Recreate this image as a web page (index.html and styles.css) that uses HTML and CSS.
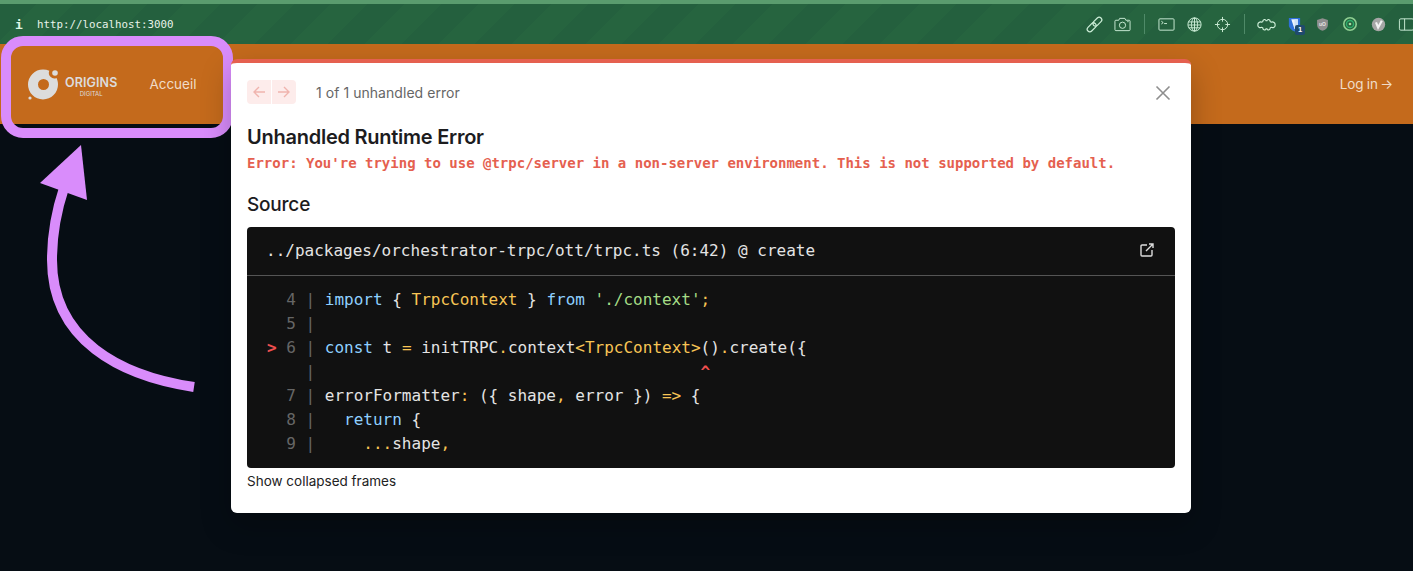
FILE: index.html
```html
<!DOCTYPE html>
<html lang="en">
<head>
<meta charset="utf-8">
<title>Unhandled Runtime Error</title>
<link rel="stylesheet" href="styles.css">
</head>
<body>
<div class="toolbar">
  <div class="address"><span class="info">i</span><span class="url">http://localhost:3000</span></div>
  <div class="tools">
    <span class="tool"><svg viewBox="0 0 18 18" class="ico ico-bold"><rect x="0.500" y="9.250" width="11" height="5.500" rx="2.750" transform="rotate(-45 6 12)"/><rect x="6.500" y="3.250" width="11" height="5.500" rx="2.750" transform="rotate(-45 12 6)"/></svg></span>
    <span class="tool"><svg viewBox="0 0 18 16" class="ico"><path d="M1 4.500a1 1 0 0 1 1-1h3l1-2h5.500l1 2H16a1 1 0 0 1 1 1v9a1 1 0 0 1-1 1H2a1 1 0 0 1-1-1z"/><circle cx="9" cy="8.800" r="3.300"/><path d="M14 5h1.500"/></svg></span>
    <span class="sep"></span>
    <span class="tool"><svg viewBox="0 0 18 14" class="ico"><rect x="1" y="1" width="16" height="12" rx="1"/><path d="M3.500 3.500l2 1.500-2 1.500M6.500 6h3"/></svg></span>
    <span class="tool"><svg viewBox="0 0 18 18" class="ico"><circle cx="9" cy="9" r="7"/><ellipse cx="9" cy="9" rx="3.200" ry="7"/><path d="M2.500 6.300h13M2.200 9.500h13.600M3 12.500h12M9 2v14"/></svg></span>
    <span class="tool"><svg viewBox="0 0 18 18" class="ico"><circle cx="9" cy="9" r="5.500"/><path d="M9 1v5M9 12v5M1 9h5M12 9h5"/></svg></span>
    <span class="sep"></span>
    <span class="tool"><svg viewBox="0 0 20 14" class="ico ico-wide"><path d="M6 4C6 1.500 9 1 9.500 3L10.500 3C11 1 14 1.500 14 4L15 4.500C17 3.500 19.500 5.500 19 7.500C19.500 9.500 17 11 15 10L14 10.500C14 13 11 13.500 10.500 11.500L9.500 11.500C9 13.500 6 13 6 10.500L5 10C3 11 .5 9.500 1 7.500C.5 5.500 3 3.500 5 4.500Z"/></svg></span>
    <span class="tool">
      <svg viewBox="0 0 14 16" class="ext"><path d="M1 1h12v8c0 2.500-3 5-6 6.500C4 14 1 11.500 1 9z" fill="#2f6fd8"/><path d="M3.500 2.500H10.500V9c0 1.200-1.500 2.600-3.500 3.800z" fill="#eef3fb"/><path d="M7 2.500H10.500V9c0 1.200-1.500 2.600-3.500 3.800z" fill="#cfe0f7"/></svg>
      <span class="badge">1</span>
    </span>
    <span class="tool"><svg viewBox="0 0 18 18" class="ext"><path d="M9 1.500l6.500 2v6c0 3.500-3 5.800-6.500 7-3.500-1.200-6.500-3.500-6.500-7v-6z" fill="#8f8f8f"/><text x="9" y="10.500" class="ub">uO</text></svg></span>
    <span class="tool"><svg viewBox="0 0 18 18" class="ext ext-plain"><circle cx="9" cy="9" r="7" stroke="#8fcf92" stroke-width="1.800"/><circle cx="9" cy="9" r="4" stroke="#2fae6c" stroke-width="1.600"/><circle cx="9" cy="9" r="1.500" fill="#a6e0a0"/></svg></span>
    <span class="tool"><svg viewBox="0 0 18 18" class="ext"><circle cx="9" cy="9" r="8" fill="#a6a6a6"/><path d="M6 6.500l2.500 6 4.500-8" fill="none" stroke="#f2f2f2" stroke-width="2.600"/></svg></span>
    <span class="tool"><svg viewBox="0 0 18 18" class="ico"><rect x="1.500" y="3" width="15" height="12" rx="1.500"/><path d="M7 3v12"/></svg></span>
  </div>
</div>

<header class="nav">
  <div class="nav-left">
    <div class="logo">
      <svg viewBox="0 0 33 33" class="logo-mark">
        <path fill-rule="evenodd" d="M16 1.500a15 15 0 1 0 15 15c0-2.300-.5-4.500-1.500-6.500a5.500 5.500 0 0 1-7.200-7.200A15 15 0 0 0 16 1.500zm.5 9.500a5.500 5.500 0 1 1 0 11 5.500 5.500 0 0 1 0-11z"/>
        <circle cx="28" cy="5" r="2.800"/>
        <circle cx="3" cy="30" r="1.600"/>
      </svg>
      <div class="logo-text"><span class="logo-name">ORIGINS</span><span class="logo-sub">DIGITAL</span></div>
    </div>
    <a class="nav-link">Accueil</a>
  </div>
  <a class="nav-link nav-login">Log in <span class="login-arrow">→</span></a>
</header>

<div class="highlight"></div>
<svg class="arrow" viewBox="0 0 200 270">
  <path class="arrow-line" d="M194 257C120 246 52 210 52 130C52 105 56 82 64 58"/>
  <path class="arrow-head" d="M81 15L40 53L87 70z"/>
</svg>

<main class="modal">
  <div class="pager">
    <div class="pager-btns">
      <span class="pager-btn"><svg viewBox="0 0 14 14" class="pg"><path d="M13 7H2M7 2L2 7l5 5"/></svg></span>
      <span class="pager-btn"><svg viewBox="0 0 14 14" class="pg"><path d="M1 7h11M7 2l5 5-5 5"/></svg></span>
    </div>
    <span class="pager-text">1 of 1 unhandled error</span>
    <svg viewBox="0 0 16 16" class="close"><path d="M1.500 1.500l13 13M14.500 1.500l-13 13"/></svg>
  </div>
  <h1 class="title">Unhandled Runtime Error</h1>
  <p class="message">Error: You're trying to use @trpc/server in a non-server environment. This is not supported by default.</p>
  <h2 class="source">Source</h2>
  <section class="code">
    <div class="code-head">
      <span>../packages/orchestrator-trpc/ott/trpc.ts (6:42) @ create</span>
      <svg viewBox="0 0 16 16" class="ext-link"><path d="M8 3H3a1 1 0 0 0-1 1v9a1 1 0 0 0 1 1h9a1 1 0 0 0 1-1V8M7 9l7-7M10 2h4v4"/></svg>
    </div>
<pre class="code-body"><span class="dim">  4 | </span><span class="kw">import</span> { <span class="ty">TrpcContext</span> } <span class="kw">from</span> <span class="str">'./context'</span><span class="ty">;</span>
<span class="dim">  5 | </span>
<span class="err">&gt;</span><span class="dim"> 6 | </span><span class="kw">const</span> t <span class="ty">=</span> initTRPC<span class="ty">.</span>context<span class="ty">&lt;TrpcContext&gt;</span>()<span class="ty">.</span>create({
<span class="dim">    | </span>                                       <span class="err">^</span>
<span class="dim">  7 | </span>errorFormatter<span class="ty">:</span> ({ shape<span class="ty">,</span> error }) <span class="ty">=&gt;</span> {
<span class="dim">  8 | </span>  <span class="kw">return</span> {
<span class="dim">  9 | </span>    <span class="ty">...</span>shape<span class="ty">,</span></pre>
  </section>
  <p class="frames">Show collapsed frames</p>
</main>
</body>
</html>
```
FILE: styles.css
```css
* { box-sizing: border-box; }
html, body { margin: 0; height: 571px; overflow: hidden; }
body { position: relative; background: #060d14; font-family: Inter, "Liberation Sans", sans-serif; }

.toolbar {
  height: 44px;
  border-top: 4px solid #5a9c6e;
  background: repeating-linear-gradient(135deg, #24603e 0 26px, #26643f 26px 52px);
  display: flex;
  align-items: center;
  justify-content: space-between;
  padding-left: 15px;
  color: #e8f2ea;
}
.address { display: flex; align-items: center; gap: 16px; font-family: "DejaVu Sans Mono", monospace; }
.info { font-size: 13px; font-weight: 700; color: #dff5e4; width: 6px; }
.url { font-size: 10.800px; }
.tools { display: flex; align-items: center; margin-right: -7px; }
.tool { width: 28px; height: 28px; display: flex; align-items: center; justify-content: center; position: relative; }
.sep { width: 1px; height: 20px; background: #4f8a68; margin: 0 7.500px; }
.ico { width: 17px; height: 17px; fill: none; stroke: #cdeed8; stroke-width: 1; }
.ico-bold { stroke-width: 1.300; }
.ico-wide { width: 19px; stroke-width: 1.200; }
.ext { width: 15px; height: 15px; }
.ext-plain { fill: none; width: 16px; height: 16px; }
.ub { font: 700 6px "Liberation Sans", sans-serif; fill: #e6e6e6; text-anchor: middle; }
.badge {
  position: absolute; left: 15px; top: 15px;
  width: 10px; height: 10px; border-radius: 2px;
  background: #1f4a6e; color: #fff;
  font: 700 7.500px/10px "Liberation Sans", sans-serif; text-align: center;
}

.nav {
  height: 80px;
  background: #c46a1c;
  display: flex;
  align-items: center;
  justify-content: space-between;
  padding: 0 20px 0 27px;
}
.nav-left { display: flex; align-items: center; gap: 32px; }
.nav-link { font-size: 13.500px; color: #f0dcc8; }
.nav-login { letter-spacing: -0.200px; }
.login-arrow { margin-left: -1px; }
.logo { display: flex; align-items: center; gap: 5px; color: #dcdcdc; }
.logo-mark { width: 33px; height: 33px; fill: #dcdcdc; }
.logo-text { display: flex; flex-direction: column; align-items: center; line-height: 1; margin-top: 6px; }
.logo-name { font-size: 12.500px; font-weight: 600; letter-spacing: 0.100px; }
.logo-sub { font-size: 6px; margin-top: 1px; }

.highlight {
  position: absolute; left: 1px; top: 36px;
  width: 232px; height: 102px;
  border: 10px solid #d98cfb;
  border-radius: 22px;
}
.arrow { position: absolute; left: 0; top: 130px; width: 200px; height: 270px; }
.arrow-line { fill: none; stroke: #d98cfb; stroke-width: 10; }
.arrow-head { fill: #d98cfb; }

.modal {
  position: absolute; left: 231px; top: 59px;
  width: 960px; height: 454px;
  background: #fff;
  border-top: 4px solid #e5604f;
  border-radius: 6px;
  padding: 17px 16px 0;
  color: #1c1c1e;
  box-shadow: 0 12px 30px rgba(0, 0, 0, 0.25);
}
.pager { display: flex; align-items: center; height: 24px; }
.pager-btns { display: flex; gap: 1px; margin-right: 20px; }
.pager-btn { width: 24px; height: 24px; background: #fdeceb; display: flex; align-items: center; justify-content: center; }
.pager-btn:first-child { border-radius: 4px 0 0 4px; }
.pager-btn:last-child { border-radius: 0 4px 4px 0; }
.pg { width: 14px; height: 14px; fill: none; stroke: #f0b4ae; stroke-width: 1.400; }
.pager-text { font-size: 14px; color: #666; letter-spacing: 0.050px; }
.close { width: 16px; height: 16px; margin: 2px 4px 0 auto; fill: none; stroke: #8e8e8e; stroke-width: 1.600; }
.title { margin: 21px 0 0; font-size: 20px; line-height: 24px; font-weight: 600; letter-spacing: -0.250px; }
.message { margin: 4px 0 0; font: 700 14px/20px "DejaVu Sans Mono", monospace; color: #e5604f; }
.source { margin: 20px 0 0; font-size: 19px; line-height: 24px; font-weight: 500; letter-spacing: -0.200px; }
.code { margin-top: 10px; height: 241px; background: #111; border-radius: 4px; color: #e4e4e4; font-family: "DejaVu Sans Mono", monospace; font-size: 16px; }
.code-head { height: 49px; border-bottom: 1px solid #555; padding: 0 20px 2px 19px; display: flex; align-items: center; justify-content: space-between; }
.ext-link { width: 16px; height: 16px; fill: none; stroke: #ddd; stroke-width: 1.400; }
.code-body { margin: 0; padding: 12px 20px; font: inherit; line-height: 24px; }
.dim { color: #666; }
.kw { color: #8fd0ff; }
.ty { color: #f8c555; }
.str { color: #a5dc86; }
.err { color: #ef4f4f; font-weight: 700; }
.frames { margin: 5px 0 0; font-size: 13.500px; line-height: 16px; color: #222; }
```
